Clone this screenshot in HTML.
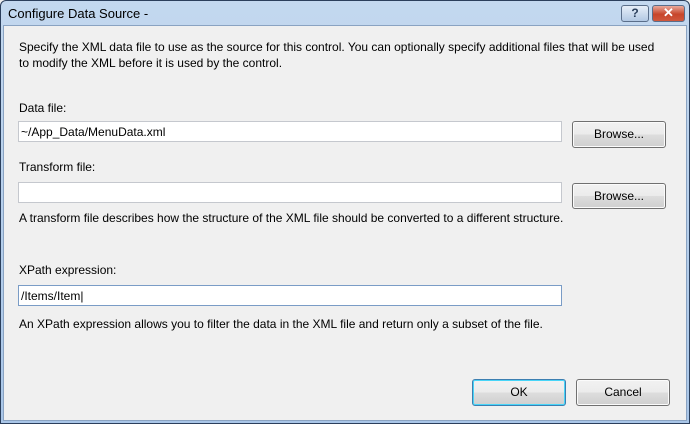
<!DOCTYPE html>
<html><head><style>
*{margin:0;padding:0;box-sizing:border-box}
body{width:690px;height:424px;overflow:hidden;background:#f0f0f0;font-family:"Liberation Sans",sans-serif;font-size:12px;color:#000;position:relative}
.frame{position:absolute;left:0;top:0;width:690px;height:424px;border:1px solid #2b3f5c;border-radius:6px 6px 0 0;background:linear-gradient(#c3d8ef,#a9c6e8)}
.client{position:absolute;left:3px;top:25px;right:3px;bottom:3px;background:#f0f0f0;border:1px solid #8aa3c2}
.t{position:absolute;white-space:nowrap}
.in{position:absolute;background:#fff;border:1px solid #c5c8ce;height:21px;padding:3px 2px}
.btn{position:absolute;border:1px solid #707070;border-radius:3px;background:linear-gradient(#f2f2f2 0,#ebebeb 50%,#dddddd 51%,#cfcfcf 100%);text-align:center;line-height:24px;box-shadow:inset 0 0 0 1px #fbfbfb}
.ok{border-color:#3c7fb1;box-shadow:inset 0 0 0 1px #48d5f8}
.cap{position:absolute;top:5px;height:17px;border:1px solid #5a6e8a;border-radius:3px;color:#fff;text-align:center;font-weight:bold;line-height:14px}
</style></head><body>
<div class="frame"></div>
<div class="t" style="left:8px;top:6px;font-size:13px">Configure Data Source -</div>
<div class="cap" style="left:621px;width:28px;background:linear-gradient(#e6eef8,#b2c8e3);color:#2a3f5c">?</div>
<div class="cap" style="left:652px;width:33px;background:linear-gradient(#e9a99b,#c7462b 55%,#d0583d);font-size:13px">✕</div>
<div class="client"></div>
<div class="t" style="left:19px;top:40px">Specify the XML data file to use as the source for this control. You can optionally specify additional files that will be used</div>
<div class="t" style="left:19px;top:56px">to modify the XML before it is used by the control.</div>
<div class="t" style="left:19px;top:101px">Data file:</div>
<div class="in" style="left:18px;top:121px;width:544px">~/App_Data/MenuData.xml</div>
<div class="btn" style="left:572px;top:121px;width:94px;height:27px">Browse...</div>
<div class="t" style="left:19px;top:160px">Transform file:</div>
<div class="in" style="left:18px;top:182px;width:544px"></div>
<div class="btn" style="left:572px;top:183px;width:94px;height:26px">Browse...</div>
<div class="t" style="left:19px;top:211px">A transform file describes how the structure of the XML file should be converted to a different structure.</div>
<div class="t" style="left:19px;top:263px">XPath expression:</div>
<div class="in" style="left:18px;top:285px;width:544px;border-color:#7a9cc6">/Items/Item|</div>
<div class="t" style="left:19px;top:317px">An XPath expression allows you to filter the data in the XML file and return only a subset of the file.</div>
<div class="btn ok" style="left:472px;top:379px;width:94px;height:27px">OK</div>
<div class="btn" style="left:576px;top:379px;width:94px;height:27px">Cancel</div>
</body></html>
